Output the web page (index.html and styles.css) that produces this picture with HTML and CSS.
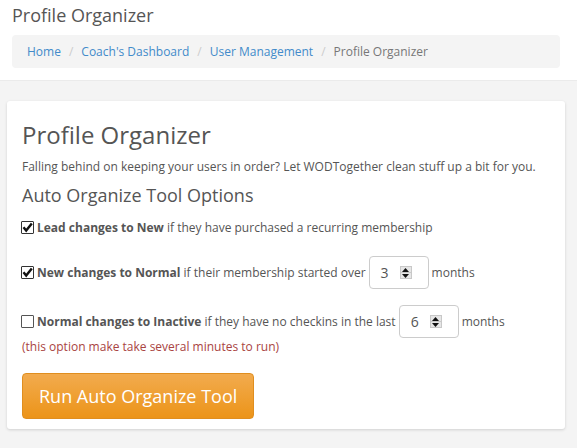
FILE: index.html
```html
<!DOCTYPE html>
<html>
<head>
<meta charset="utf-8">
<link rel="stylesheet" href="styles.css">
</head>
<body>
<header class="top">
  <div class="page-title">Profile Organizer</div>
  <ol class="crumbs">
    <li><a href="#">Home</a></li>
    <li class="sep">/</li>
    <li><a href="#">Coach's Dashboard</a></li>
    <li class="sep">/</li>
    <li><a href="#">User Management</a></li>
    <li class="sep">/</li>
    <li class="active">Profile Organizer</li>
  </ol>
</header>
<main class="main">
  <section class="card">
    <h1 class="card-title">Profile Organizer</h1>
    <p class="lead">Falling behind on keeping your users in order? Let WODTogether clean stuff up a bit for you.</p>
    <h3 class="sub">Auto Organize Tool Options</h3>

    <div class="row row1">
      <span class="cb checked"><svg viewBox="0 0 13 13" width="13" height="13"><path d="M2.5 6.2 L5.2 9.6 L10.8 2.4" fill="none" stroke="#111" stroke-width="2.4"/></svg></span>
      <span class="txt"><b>Lead changes to New</b> if they have purchased a recurring membership</span>
    </div>

    <div class="row row2">
      <span class="cb checked"><svg viewBox="0 0 13 13" width="13" height="13"><path d="M2.5 6.2 L5.2 9.6 L10.8 2.4" fill="none" stroke="#111" stroke-width="2.4"/></svg></span>
      <span class="txt"><b>New changes to Normal</b> if their membership started over</span>
      <span class="num"><span class="val">3</span><span class="spin"><span class="up"><svg viewBox="0 0 7 4" width="7" height="4"><path d="M0 4 L3.5 0 L7 4Z" fill="#111"/></svg></span><span class="dn"><svg viewBox="0 0 7 4" width="7" height="4"><path d="M0 0 L3.5 4 L7 0Z" fill="#111"/></svg></span></span></span>
      <span class="txt">months</span>
    </div>

    <div class="row row3">
      <span class="cb"></span>
      <span class="txt"><b>Normal changes to Inactive</b> if they have no checkins in the last</span>
      <span class="num"><span class="val">6</span><span class="spin"><span class="up"><svg viewBox="0 0 7 4" width="7" height="4"><path d="M0 4 L3.5 0 L7 4Z" fill="#111"/></svg></span><span class="dn"><svg viewBox="0 0 7 4" width="7" height="4"><path d="M0 0 L3.5 4 L7 0Z" fill="#111"/></svg></span></span></span>
      <span class="txt">months</span>
    </div>
    <p class="warn">(this option make take several minutes to run)</p>

    <button class="btn">Run Auto Organize Tool</button>
  </section>
</main>
</body>
</html>
```

FILE: styles.css
```css
html, body {
  margin: 0;
  padding: 0;
}
body {
  font-family: "Open Sans", "DejaVu Sans", sans-serif;
  color: #555;
  background: #f4f4f4;
  font-size: 12px;
  line-height: 17.14px;
}
.top {
  background: #fff;
  height: 80px;
  padding: 0 17px 0 12px;
  box-sizing: border-box;
  overflow: hidden;
}
.page-title {
  font-size: 18px;
  line-height: 20px;
  margin-top: 5px;
  color: #555;
}
.crumbs {
  list-style: none;
  margin: 10px 0 0 0;
  padding: 7px 15px;
  background: #f4f4f4;
  border-radius: 4px;
  display: flex;
  height: 19px;
  line-height: 19px;
  font-size: 12px;
}
.crumbs li {
  margin: 0;
}
.crumbs a {
  color: #428bca;
  text-decoration: none;
}
.crumbs .sep {
  color: #ccc;
  padding: 0 8px 0 8px;
}
.crumbs .active {
  color: #777;
}
.main {
  border-top: 1px solid #ebebeb;
  padding: 20px 12px 20px 7px;
}
.card {
  background: #fff;
  border-radius: 3px;
  box-shadow: 0 1px 3px rgba(0,0,0,0.15);
  padding: 15px 15px 10px 15px;
}
.card-title {
  font-size: 24px;
  line-height: 26.4px;
  font-weight: normal;
  margin: 6px 0 10px 0;
  color: #555;
}
.lead {
  margin: 0 0 10px 0;
}
.sub {
  font-size: 18px;
  line-height: 19.8px;
  font-weight: normal;
  margin: 0 0 14px 0;
  color: #555;
}
.row {
  display: flex;
  align-items: center;
}
.row1 { margin-bottom: 20px; }
.row2 { margin-bottom: 16px; }
.cb {
  width: 13px;
  height: 13px;
  box-sizing: border-box;
  border: 1px solid #333;
  border-radius: 1px;
  margin: 0 3px 0 -1px;
  background: #fff;
  position: relative;
  flex: none;
}
.cb svg {
  position: absolute;
  left: -1px;
  top: -1px;
}
.cb:not(.checked) {
  border-color: #555;
}
.txt b {
  font-weight: bold;
}
.num {
  width: 60px;
  height: 33px;
  box-sizing: border-box;
  border: 1px solid #ccc;
  border-radius: 4px;
  margin: 0 3px 0 3px;
  display: flex;
  align-items: center;
  padding-left: 11px;
  font-size: 14px;
  color: #555;
  flex: none;
}
.val {
  width: 19px;
}
.spin {
  display: flex;
  flex-direction: column;
  width: 12px;
  height: 13px;
  border: 1px solid #c8c8c8;
  box-sizing: border-box;
  background: #e6e6e6;
}
.spin .up, .spin .dn {
  flex: 1;
  display: flex;
  align-items: center;
  justify-content: center;
}
.spin .up {
  border-bottom: 1px solid #c8c8c8;
}
.warn {
  color: #a94442;
  margin: 0;
}
.btn {
  margin-top: 17px;
  font-family: "Open Sans", "DejaVu Sans", sans-serif;
  font-size: 18px;
  line-height: 24px;
  padding: 10px 16px;
  color: #fff;
  border: 1px solid #e08e1f;
  border-radius: 4px;
  background: linear-gradient(to bottom, #f2ab4e 0%, #ec9419 100%);
  cursor: pointer;
  display: block;
}
```
